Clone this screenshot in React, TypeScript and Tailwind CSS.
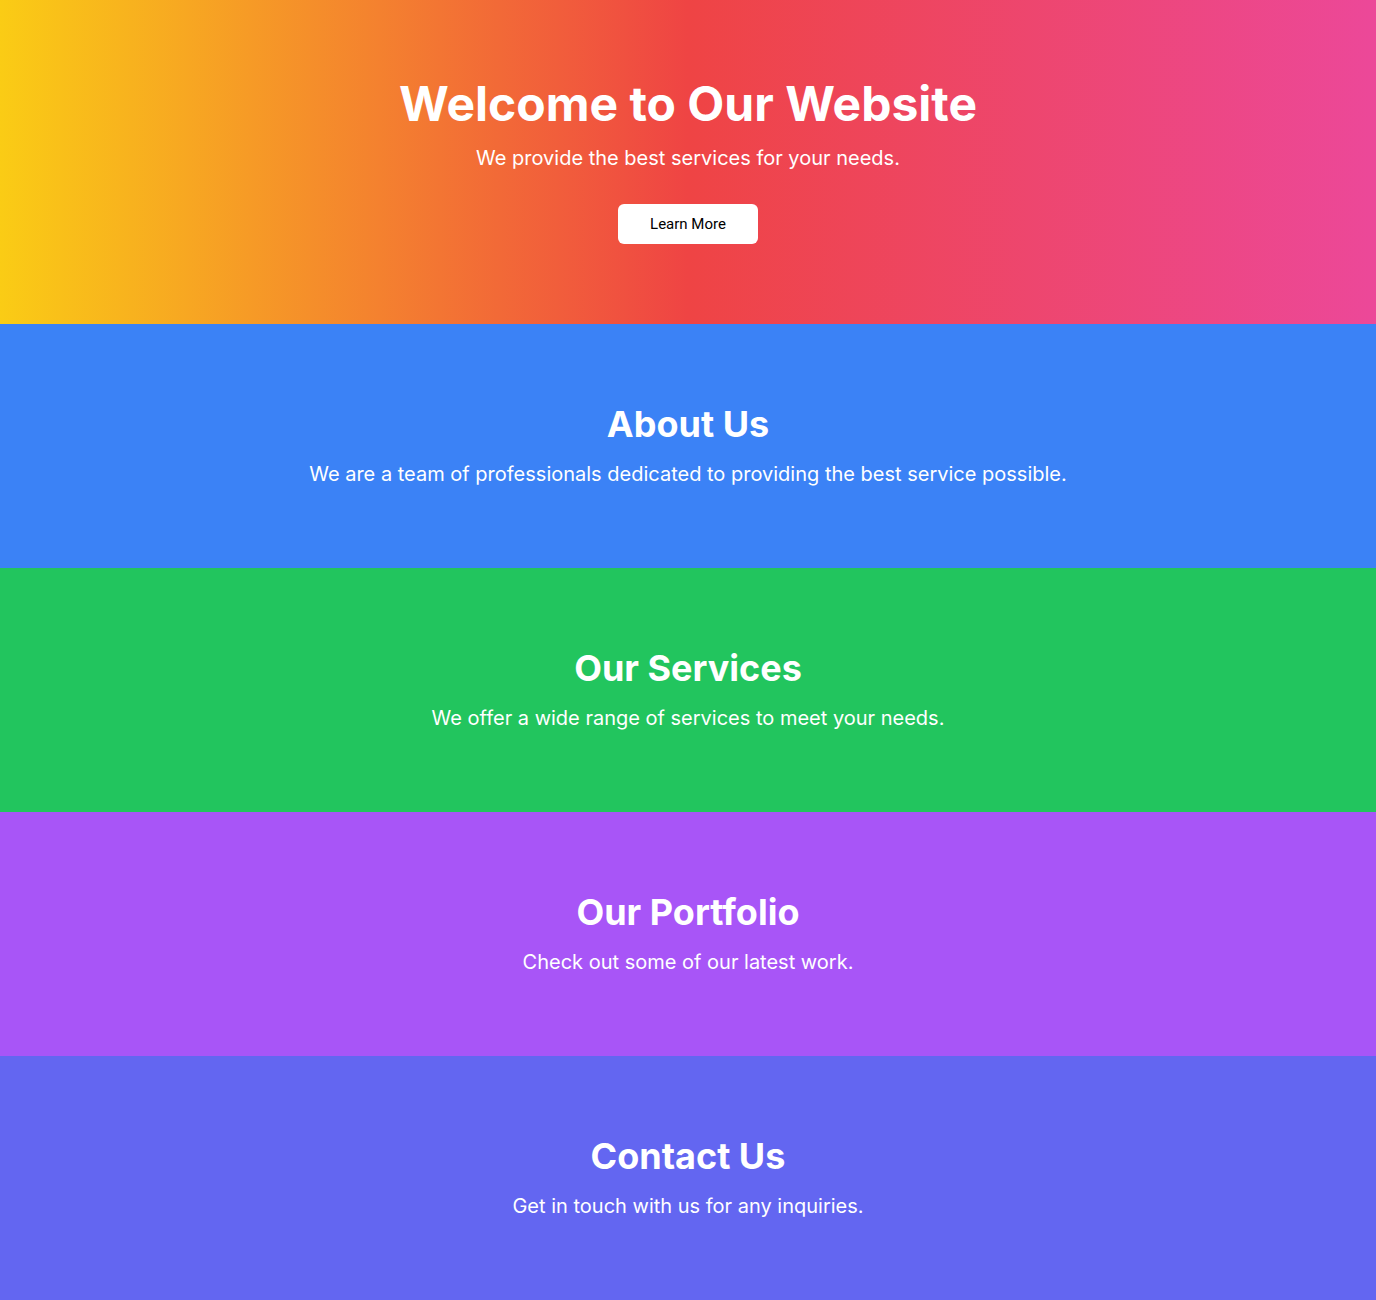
const sections = [
  { title: "About Us", text: "We are a team of professionals dedicated to providing the best service possible.", bg: "bg-[#3b82f6]" },
  { title: "Our Services", text: "We offer a wide range of services to meet your needs.", bg: "bg-[#22c55e]" },
  { title: "Our Portfolio", text: "Check out some of our latest work.", bg: "bg-[#a855f7]" },
  { title: "Contact Us", text: "Get in touch with us for any inquiries.", bg: "bg-[#6366f1]" },
];

export default function App() {
  return (
    <div className="font-['Inter',sans-serif] text-white">
      <header className="bg-linear-to-r/srgb from-[#facc15] via-[#ef4444] to-[#ec4899] py-20 text-center">
        <h1 className="mb-4 text-5xl font-bold">Welcome to Our Website</h1>
        <p className="mb-8 text-xl">We provide the best services for your needs.</p>
        <button className="h-10 w-[140px] rounded-md bg-white font-['Roboto',sans-serif] text-[15px] text-black">
          Learn More
        </button>
      </header>
      {sections.map((s) => (
        <section key={s.title} className={`${s.bg} py-20 text-center`}>
          <h2 className="mb-4 text-4xl font-bold">{s.title}</h2>
          <p className="text-xl">{s.text}</p>
        </section>
      ))}
    </div>
  );
}
